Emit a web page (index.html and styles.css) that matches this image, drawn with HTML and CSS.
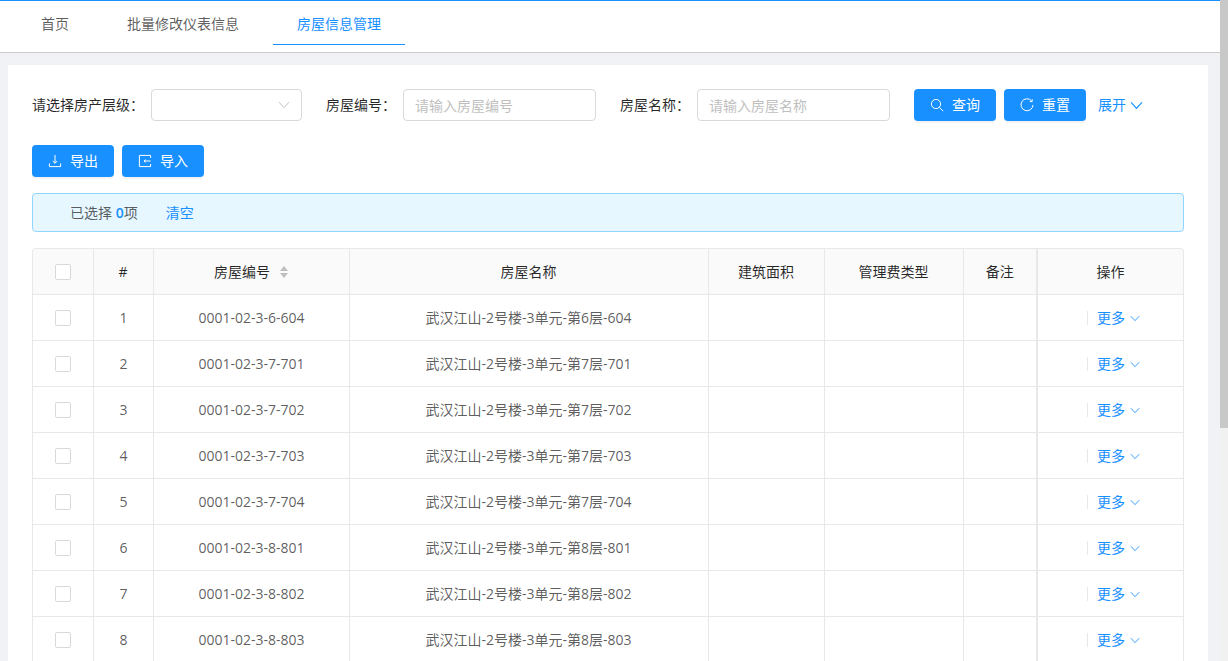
FILE: index.html
```html
<!DOCTYPE html>
<html lang="zh-CN">
<head>
  <meta charset="UTF-8" />
  <title>房屋信息管理</title>
  <link rel="stylesheet" href="styles.css">
</head>
<body>
  <div class="page">
    <header class="tabs">
      <a class="tab tab-home">首页</a>
      <a class="tab tab-meter">批量修改仪表信息</a>
      <a class="tab tab-active">房屋信息管理</a>
    </header>

    <main class="card">
      <form class="search-row">
        <label class="field-label label-level">请选择房产层级：</label>
        <div class="select">
          <svg class="select-arrow" viewBox="0 0 12 8"><path d="M1 1.2 6 6.6l5-5.4" /></svg>
        </div>
        <label class="field-label label-code">房屋编号：</label>
        <input class="text-input" placeholder="请输入房屋编号">
        <label class="field-label label-name">房屋名称：</label>
        <input class="text-input" placeholder="请输入房屋名称">
        <button type="button" class="btn btn-search">
          <svg class="btn-icon" viewBox="0 0 14 14"><circle cx="6" cy="6" r="4.6" /><path d="m9.4 9.4 3.8 3.8" /></svg>查询
        </button>
        <button type="button" class="btn">
          <svg class="btn-icon" viewBox="0 0 14 14"><path d="M11.6 2.9A6 6 0 1 0 13 7" /><path d="M12.2 1.2v2.4H9.8" /></svg>重置
        </button>
        <a class="expand">展开
          <svg viewBox="0 0 12 8"><path d="M1 1.2 6 6.6l5-5.4" /></svg>
        </a>
      </form>

      <div class="action-row">
        <button type="button" class="btn">
          <svg class="btn-icon" viewBox="0 0 14 14"><path d="M7 1v8.2M4.8 7 7 9.2 9.2 7M1.4 9.4v3.2h11.2V9.4" /></svg>导出
        </button>
        <button type="button" class="btn">
          <svg class="btn-icon" viewBox="0 0 14 14"><path d="M12.6 4V1.4H1.4v11.2h11.2V10M12.6 7H6M7.6 5.6 6 7l1.6 1.4" /></svg>导入
        </button>
      </div>

      <div class="alert">
        <span>已选择 <b>0</b>项</span>
        <a>清空</a>
      </div>

      <div class="table-wrap">
        <table>
          <colgroup>
            <col class="col-check"><col class="col-index"><col class="col-code"><col class="col-name">
            <col class="col-area"><col class="col-fee"><col class="col-note"><col class="col-ops">
          </colgroup>
          <thead>
            <tr>
              <th><span class="checkbox"></span></th>
              <th>#</th>
              <th>房屋编号<span class="sorter"><i class="up"></i><i class="down"></i></span></th>
              <th>房屋名称</th>
              <th>建筑面积</th>
              <th>管理费类型</th>
              <th>备注</th>
              <th class="ops">操作</th>
            </tr>
          </thead>
          <tbody id="rows"></tbody>
        </table>
      </div>
    </main>
  </div>

  <aside class="scrollbar"><div class="scrollbar-thumb"></div></aside>

  <script>
    const rooms = [
      ['0001-02-3-6-604', '第6层-604'],
      ['0001-02-3-7-701', '第7层-701'],
      ['0001-02-3-7-702', '第7层-702'],
      ['0001-02-3-7-703', '第7层-703'],
      ['0001-02-3-7-704', '第7层-704'],
      ['0001-02-3-8-801', '第8层-801'],
      ['0001-02-3-8-802', '第8层-802'],
      ['0001-02-3-8-803', '第8层-803']
    ];

    document.getElementById('rows').innerHTML = rooms.map((room, i) => `
      <tr>
        <td><span class="checkbox"></span></td>
        <td class="nudge">${i + 1}</td>
        <td class="nudge">${room[0]}</td>
        <td>武汉江山-2号楼-3单元-${room[1]}</td>
        <td></td>
        <td></td>
        <td></td>
        <td class="ops"><span class="more">更多<svg viewBox="0 0 12 8"><path d="M1 1.2 6 6.6l5-5.4" /></svg></span></td>
      </tr>`).join('');
  </script>
</body>
</html>
```

FILE: styles.css
```css
* {
  margin: 0;
  padding: 0;
  box-sizing: border-box;
}

html, body {
  height: 661px;
  overflow: hidden;
}

body {
  display: flex;
  font-family: "Open Sans", "Noto Sans CJK SC", sans-serif;
  font-size: 14px;
  line-height: 20px;
  color: rgba(0, 0, 0, 0.65);
}

.page {
  flex: 1;
  min-width: 0;
  height: 661px;
  overflow: hidden;
  background: #f0f2f5;
}

.scrollbar {
  width: 8px;
  background: #f1f1f1;
}

.scrollbar-thumb {
  height: 428px;
  background: #c8c8c8;
}

.tabs {
  display: flex;
  height: 53px;
  background: #fff;
  border-top: 1px solid #1890ff;
  border-bottom: 1px solid #ccc;
  padding-left: 17px;
}

.tab {
  height: 44px;
  line-height: 46px;
  padding: 0 24px;
  margin-right: 10px;
  white-space: nowrap;
}

.tab-active {
  color: #1890ff;
  border-bottom: 1px solid #1890ff;
}

.card {
  width: 1200px;
  margin: 12px 0 0 8px;
  padding: 24px;
  background: #fff;
}

.search-row,
.action-row {
  display: flex;
  align-items: center;
  height: 32px;
}

.action-row {
  margin-top: 24px;
  gap: 8px;
}

.field-label {
  color: rgba(0, 0, 0, 0.85);
  white-space: nowrap;
}

.label-level { width: 119px; }
.label-code { width: 77px; margin-left: 24px; }
.label-name { width: 77px; margin-left: 24px; }

.select,
.text-input {
  height: 32px;
  border: 1px solid #d9d9d9;
  border-radius: 4px;
  background: #fff;
}

.select {
  position: relative;
  width: 151px;
}

.select-arrow {
  position: absolute;
  right: 11px;
  top: 11px;
  width: 12px;
  height: 8px;
  fill: none;
  stroke: #bfbfbf;
  stroke-width: 1;
}

.text-input {
  width: 193px;
  padding: 0 11px;
  font: inherit;
  outline: none;
}

.text-input::placeholder {
  color: #bfbfbf;
}

.btn {
  display: inline-flex;
  align-items: center;
  justify-content: center;
  width: 82px;
  height: 32px;
  border: 0;
  border-radius: 4px;
  background: #1890ff;
  color: #fff;
  font: inherit;
  box-shadow: 0 2px 0 rgba(0, 0, 0, 0.045);
}

.btn-search {
  margin-left: 24px;
}

.btn-search + .btn {
  margin-left: 8px;
}

.btn-icon {
  width: 14px;
  height: 14px;
  margin-right: 8px;
  fill: none;
  stroke: #fff;
  stroke-width: 1;
}

.expand {
  display: inline-flex;
  align-items: center;
  margin-left: 12px;
  color: #1890ff;
  white-space: nowrap;
}

.expand svg {
  width: 13px;
  height: 9px;
  margin-left: 4px;
  fill: none;
  stroke: #1890ff;
  stroke-width: 1.1;
}

.alert {
  display: flex;
  align-items: center;
  gap: 28px;
  height: 39px;
  margin-top: 16px;
  padding-left: 37px;
  background: #e6f7ff;
  border: 1px solid #91d5ff;
  border-radius: 4px;
}

.alert b {
  color: #1890ff;
  font-weight: 600;
}

.alert a {
  color: #1890ff;
}

.table-wrap {
  margin-top: 16px;
  border: 1px solid #e8e8e8;
  border-bottom: 0;
  border-radius: 4px 4px 0 0;
  overflow: hidden;
}

table {
  width: 100%;
  table-layout: fixed;
  border-collapse: collapse;
}

.col-check { width: 60px; }
.col-index { width: 60px; }
.col-code { width: 196px; }
.col-name { width: 359px; }
.col-area { width: 116px; }
.col-fee { width: 139px; }
.col-note { width: 74px; }

th,
td {
  height: 46px;
  padding-top: 2px;
  text-align: center;
  border-right: 1px solid #e8e8e8;
  border-bottom: 1px solid #e8e8e8;
}

th:last-child,
td:last-child {
  border-right: 0;
}

th {
  height: 45px;
  background: #fafafa;
  font-weight: 400;
  color: rgba(0, 0, 0, 0.85);
}

.ops {
  border-left: 2px solid #e8e8e8;
}

.nudge {
  padding-left: 1px;
}

.checkbox {
  display: block;
  width: 16px;
  height: 16px;
  margin: 0 auto;
  background: #fff;
  border: 1px solid #d9d9d9;
  border-radius: 2px;
}

.sorter {
  display: inline-block;
  position: relative;
  width: 8px;
  height: 12px;
  margin-left: 10px;
  vertical-align: -1px;
}

.sorter i {
  position: absolute;
  left: 0;
  border-left: 4px solid transparent;
  border-right: 4px solid transparent;
}

.sorter .up {
  top: 0;
  border-bottom: 5px solid #bfbfbf;
}

.sorter .down {
  bottom: 0;
  border-top: 5px solid #bfbfbf;
}

.more {
  display: inline-flex;
  align-items: center;
  height: 14px;
  margin-left: 6px;
  padding-left: 9px;
  border-left: 1px solid #e8e8e8;
  color: #1890ff;
}

.more svg {
  width: 10px;
  height: 7px;
  margin-left: 5px;
  fill: none;
  stroke: #1890ff;
  stroke-width: 1;
}
```
